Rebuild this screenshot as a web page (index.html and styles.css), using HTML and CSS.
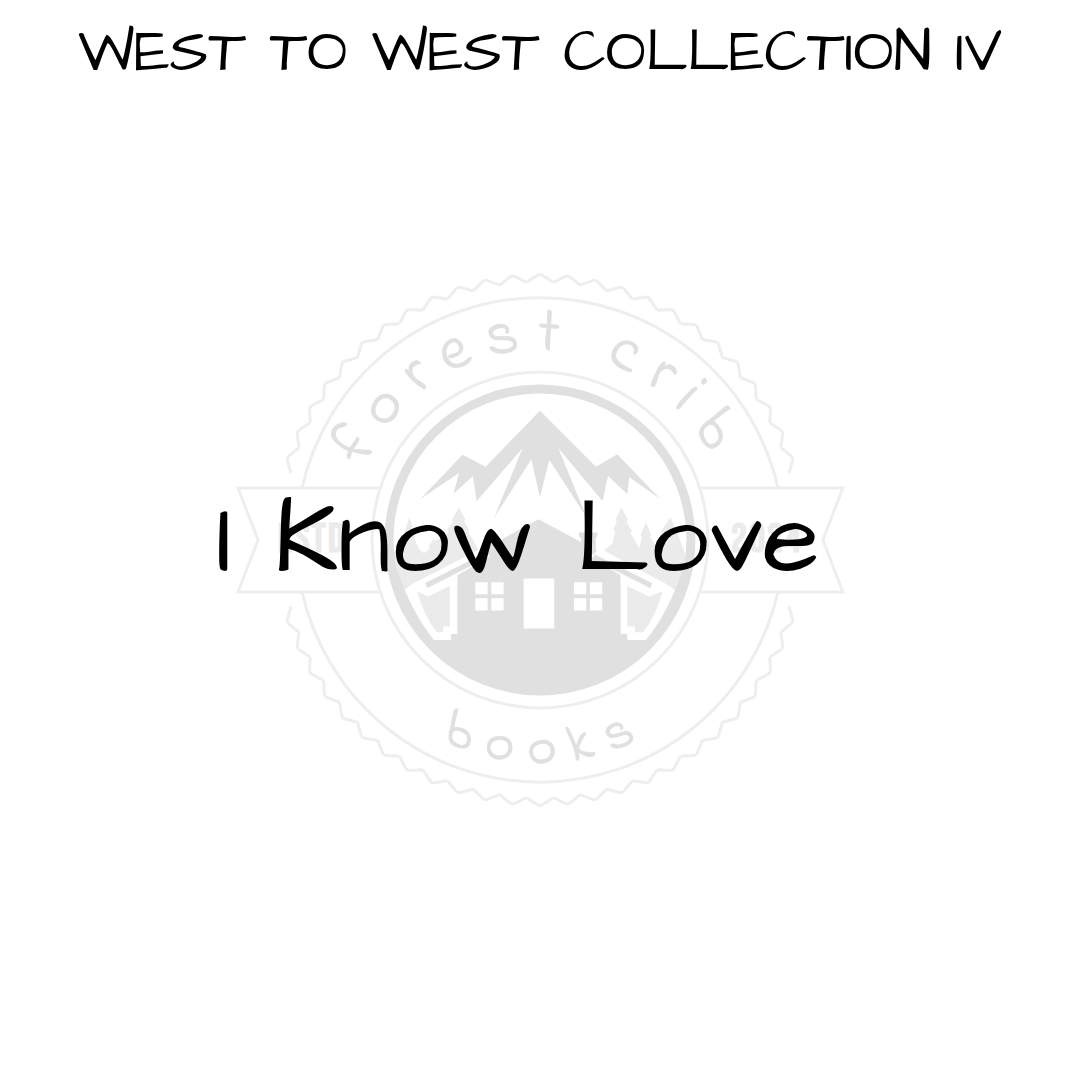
FILE: index.html
```html
<!DOCTYPE html>
<html lang="en">
<head>
<meta charset="utf-8">
<meta name="viewport" content="width=device-width, initial-scale=1">
<title>West to West Collection IV</title>
<link rel="stylesheet" href="styles.css">
</head>
<body>
<main class="cover">
  <svg class="seal" viewBox="230 270 620 540" role="img" aria-label="Forest Crib Books seal">
    <defs>
      <path id="tooth" d="M-13.5 -257.6 L-2 -265 Q0 -266 2 -265 L13.5 -257.6"/>
      <g id="teeth">
        <use href="#tooth" transform="rotate(-12)"/>
        <use href="#tooth" transform="rotate(-6)"/>
        <use href="#tooth"/>
        <use href="#tooth" transform="rotate(6)"/>
        <use href="#tooth" transform="rotate(12)"/>
      </g>
      <g id="edge">
        <use href="#teeth" transform="rotate(-60)"/>
        <use href="#teeth" transform="rotate(-30)"/>
        <use href="#teeth"/>
        <use href="#teeth" transform="rotate(30)"/>
        <use href="#teeth" transform="rotate(60)"/>
      </g>
      <path id="arc-top" d="M350 540 A190 190 0 0 1 730 540"/>
      <path id="arc-bottom" d="M317 540 A223 223 0 0 0 763 540"/>
      <clipPath id="disc"><circle cx="540" cy="540" r="151"/></clipPath>
    </defs>

    <g class="line" transform="translate(540 540)">
      <use href="#edge"/>
      <use href="#edge" transform="rotate(180)"/>
    </g>
    <g class="line">
      <path d="M302 488 A244 244 0 0 1 778 488 M302 592 A244 244 0 0 0 778 592"/>
      <path d="M380 488 H238 L258 540 L238 592 H380 M700 488 H843 L823 540 L843 592 H700"/>
      <circle cx="540" cy="540" r="168"/>
    </g>

    <text class="ribbon" x="312" y="552">ESTD</text>
    <text class="ribbon" x="767" y="552">2024</text>

    <g clip-path="url(#disc)">
      <g transform="translate(380 380) scale(.33333)">
        <path class="pale" d="M88 412 L98 440 L94 443 L108 472 L103 476 L118 508 L132 520 L150 505 L146 498 L160 480 L190 478 L206 455 L201 450 L219 425 L215 420 L237 382 L257 420 L252 425 L268 450 L264 455 L290 500 L300 520 L97 612 L60 640 L20 540 L60 500 Z"/>
        <path class="pale" d="M724 382 L745 420 L739 424 L757 455 L751 458 L778 505 L786 470 L781 466 L798 428 L814 466 L809 470 L830 500 L846 460 L842 455 L872 412 L900 480 L930 560 L900 640 L858 612 L672 512 L698 490 L706 455 L700 450 L711 425 L706 420 Z"/>
        <path class="pale" d="M112 634 L142 650 L210 618 V740 H190 V757 H170 Q130 705 112 634 Z M742 618 L808 650 L848 634 Q830 705 790 757 H765 V740 H742 Z"/>
        <path class="solid" d="M480 92 L648 260 L712 223 L842 358 L748 292 L742 342 L684 288 L668 364 L535 204 L620 412 L508 240 L480 352 L454 238 L342 414 L428 204 L290 364 L279 288 L220 342 L238 278 L120 358 L248 224 L317 260 Z"/>
        <path class="solid" d="M476 418 L603 486 V472 H597 V458 H652 V472 H648 V512 L722 550 V762 H742 V780 H798 Q865 700 912 560 H990 V980 H-20 V560 H48 Q95 700 162 780 H213 V762 H232 V550 Z"/>
        <path class="white" d="M97 612 L300 508 L330 530 L232 586 V606 L142 650 Z M858 612 L660 508 L630 530 L722 586 V606 L808 650 Z"/>
        <path class="eave" d="M139 617 L310 530 M814 617 L640 530"/>
        <path class="white" d="M431 596 H523 V746 H431 Z M286 607 H323 V643 H286 Z M334 607 H371 V643 H334 Z M286 655 H323 V692 H286 Z M334 655 H371 V692 H334 Z M582 607 H619 V643 H582 Z M630 607 H667 V643 H630 Z M582 655 H619 V692 H582 Z M630 655 H667 V692 H630 Z"/>
      </g>
    </g>
    <circle class="ring" cx="540" cy="540" r="151"/>

    <text class="arched"><textPath href="#arc-top" startOffset="50%">forest crib</textPath></text>
    <text class="arched small"><textPath href="#arc-bottom" startOffset="51%">books</textPath></text>
  </svg>
  <h1 class="collection">WEST TO WEST COLLECTION IV</h1>
  <p class="name">I Know Love</p>
</main>
</body>
</html>
```
FILE: styles.css
```css
body {
  margin: 0;
  background: #fff;
  color: #000;
  font-family: "Architects Daughter", "DejaVu Sans", sans-serif;
}

.cover {
  display: grid;
  grid-template: minmax(100vh, auto) / minmax(0, 1fr);
  justify-items: center;
  align-items: center;
}

.cover > * {
  grid-area: 1 / 1;
}

.seal {
  width: 57.4%;
}

.collection {
  align-self: start;
  margin: 17px 0 0;
  font-size: 60px;
  line-height: 72px;
  font-weight: 400;
  white-space: nowrap;
}

.name {
  margin: 0;
  padding-right: 44px;
  font-size: 105px;
  line-height: 120px;
  white-space: nowrap;
}

.line {
  fill: none;
  stroke: #eee;
  stroke-width: 3;
}

.ring {
  fill: none;
  stroke: #e0e0e0;
  stroke-width: 9;
}

.solid {
  fill: #e0e0e0;
}

.pale {
  fill: #ebebeb;
}

.white {
  fill: #fff;
}

.eave {
  fill: none;
  stroke: #e0e0e0;
  stroke-width: 16;
}

.arched {
  fill: #e0e0e0;
  stroke: #e0e0e0;
  stroke-width: 1;
  font-family: "Indie Flower", "Architects Daughter", "DejaVu Sans", sans-serif;
  font-size: 64px;
  letter-spacing: 16px;
  text-anchor: middle;
}

.small {
  font-size: 56px;
}

.ribbon {
  fill: #ebebeb;
  font: 700 40px "Bebas Neue", "Liberation Sans Narrow", sans-serif;
  letter-spacing: 2px;
  text-anchor: middle;
}
```
